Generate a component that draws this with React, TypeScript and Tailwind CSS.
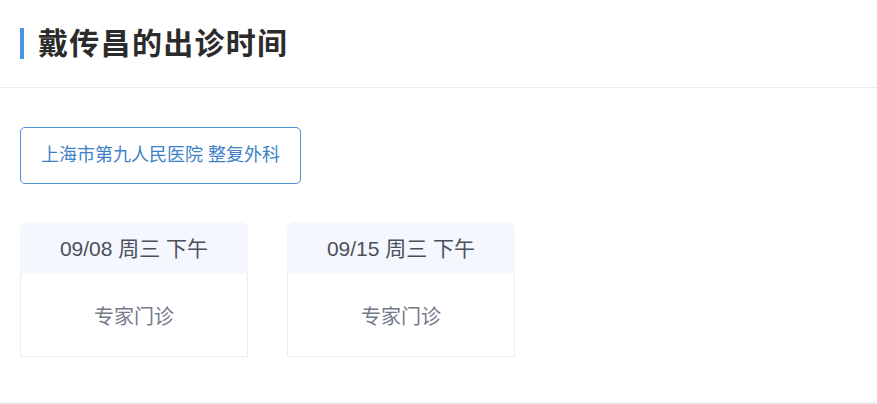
import React from "react";

const font = { fontFamily: '"Liberation Sans", "Noto Sans CJK SC", sans-serif' };

const slots = [
  { date: "09/08 周三 下午", type: "专家门诊" },
  { date: "09/15 周三 下午", type: "专家门诊" },
];

export default function App() {
  return (
    <div className="w-[877px] h-[404px] bg-white overflow-hidden flex flex-col" style={font}>
      <div className="h-[88px] border-b border-[#ececec] flex items-center pl-[20px] shrink-0">
        <div className="w-[4px] h-[31px] bg-[#4a95e0]" />
        <h1 className="ml-[14px] text-[30px] leading-[32px] font-bold text-[#2b2b2b] tracking-[1.3px]">
          戴传昌的出诊时间
        </h1>
      </div>
      <div className="px-[20px] pt-[39px] flex-1">
        <div className="inline-flex items-center h-[57px] px-[20px] border border-[#4f8fd3] rounded-[5px] text-[18px] text-[#3d82c8]">
          上海市第九人民医院 整复外科
        </div>
        <div className="mt-[38px] flex gap-[39px]">
          {slots.map((s) => (
            <div key={s.date} className="w-[228px]">
              <div className="h-[52px] bg-[#f4f7fd] rounded-t-[8px] flex items-center justify-center pt-[1px] text-[21px] text-[#4b505c]">
                {s.date}
              </div>
              <div className="h-[83px] border-x border-b border-[#ececec] flex items-center justify-center pt-[4px] text-[20px] text-[#737987]">
                {s.type}
              </div>
            </div>
          ))}
        </div>
      </div>
      <div className="h-[2px] bg-[#eeeeee] shrink-0" />
    </div>
  );
}
